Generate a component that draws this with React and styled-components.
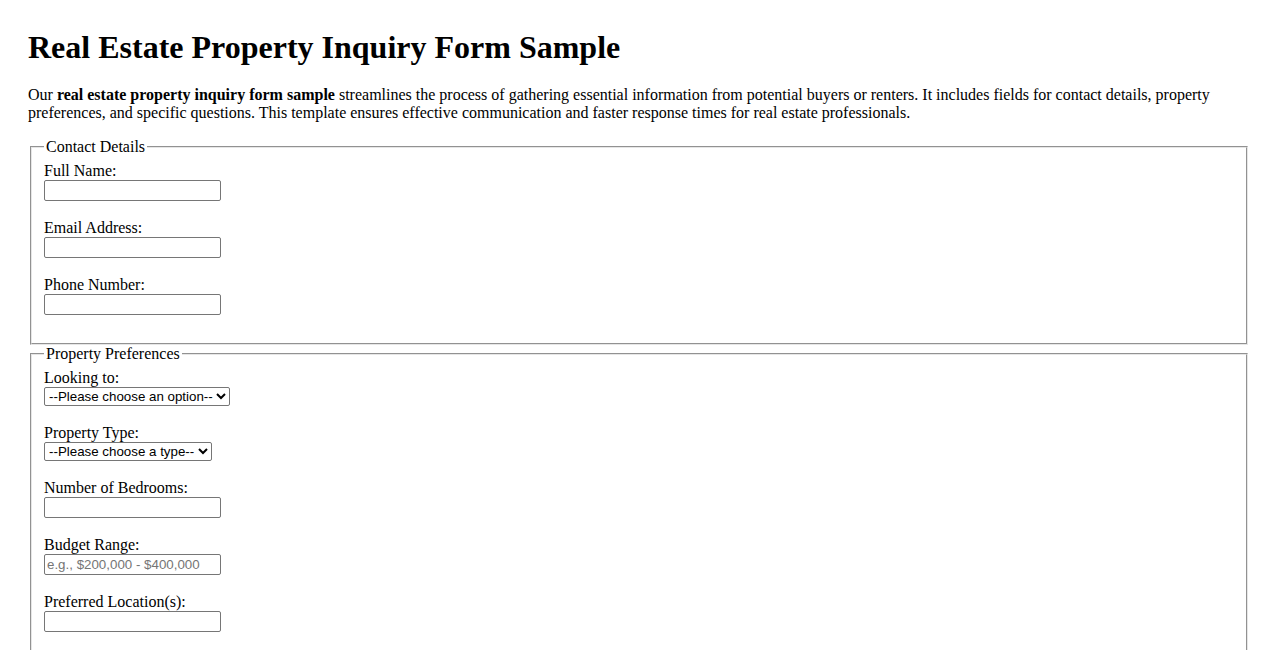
import React from "react";
import styled, { createGlobalStyle } from "styled-components";

const GlobalStyle = createGlobalStyle`
  body {
    margin: 8px;
    background: #fff;
    color: #000;
    font-family: "Liberation Serif", "Times New Roman", serif;
    font-size: 16px;
  }
`;

const Page = styled.div`
  padding: 0 20px;
`;

const Title = styled.h1`
  font-size: 32px;
  font-weight: bold;
  margin: 21.44px 0 20px;
`;

const Intro = styled.p`
  margin: 16px 0;
  line-height: normal;
`;

const Form = styled.form`
  margin: 0;
`;

const Group = styled.fieldset`
  margin: 0 2px;
  padding: 5.6px 12px 10px;
  border: 2px groove #e6e6e6;
  min-inline-size: min-content;
`;

const Legend = styled.legend`
  padding: 0 2px;
`;

const Label = styled.label`
  display: inline;
`;

const TextInput = styled.input`
  font-family: "Liberation Sans", Arial, sans-serif;
  font-size: 13.333px;
  width: 177px;
  height: 21px;
  box-sizing: border-box;
  padding: 1px 2px;
  border: 1px solid #767676;
  border-radius: 2px;
  margin: 0;
  &::placeholder {
    color: #757575;
  }
`;

const Select = styled.select`
  font-family: "Liberation Sans", Arial, sans-serif;
  font-size: 13.333px;
  height: 19px;
  box-sizing: border-box;
  border: 1px solid #767676;
  border-radius: 2px;
  background: #fff;
  color: #000;
  margin: 0;
  padding: 0;
`;

function Field({ id, label, children }) {
  return (
    <>
      <Label htmlFor={id}>{label}</Label>
      <br />
      {children}
      <br />
      <br />
    </>
  );
}

export default function App() {
  return (
    <Page>
      <GlobalStyle />
      <Title>Real Estate Property Inquiry Form Sample</Title>
      <Intro>
        Our <strong>real estate property inquiry form sample</strong> streamlines the process of
        gathering essential information from potential buyers or renters. It includes fields for
        contact details, property preferences, and specific questions. This template ensures
        effective communication and faster response times for real estate professionals.
      </Intro>
      <Form>
        <Group>
          <Legend>Contact Details</Legend>
          <Field id="name" label="Full Name:">
            <TextInput id="name" type="text" />
          </Field>
          <Field id="email" label="Email Address:">
            <TextInput id="email" type="email" />
          </Field>
          <Field id="phone" label="Phone Number:">
            <TextInput id="phone" type="tel" />
          </Field>
        </Group>
        <Group>
          <Legend>Property Preferences</Legend>
          <Field id="intent" label="Looking to:">
            <Select id="intent" defaultValue="">
              <option value="">--Please choose an option--</option>
              <option value="buy">Buy</option>
              <option value="rent">Rent</option>
            </Select>
          </Field>
          <Field id="type" label="Property Type:">
            <Select id="type" defaultValue="">
              <option value="">--Please choose a type--</option>
              <option value="house">House</option>
              <option value="apartment">Apartment</option>
              <option value="condo">Condo</option>
            </Select>
          </Field>
          <Field id="bedrooms" label="Number of Bedrooms:">
            <TextInput id="bedrooms" type="number" />
          </Field>
          <Field id="budget" label="Budget Range:">
            <TextInput id="budget" type="text" placeholder="e.g., $200,000 - $400,000" />
          </Field>
          <Field id="location" label="Preferred Location(s):">
            <TextInput id="location" type="text" />
          </Field>
        </Group>
      </Form>
    </Page>
  );
}
